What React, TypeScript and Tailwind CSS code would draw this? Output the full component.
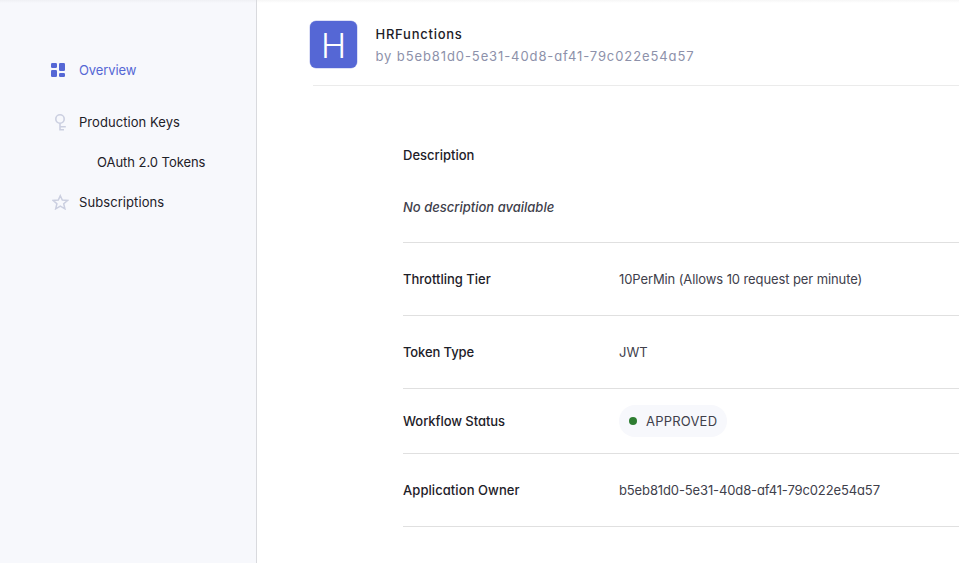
import type { ReactNode } from "react";

function OverviewIcon() {
  return (
    <svg width="14" height="14" viewBox="0 0 14 14" fill="#5567d5" className="block">
      <rect x="0" y="0" width="6" height="5" rx="1.2" />
      <rect x="8" y="0" width="6" height="8" rx="1.2" />
      <rect x="0" y="7" width="6" height="7" rx="1.2" />
      <rect x="8" y="10" width="6" height="4" rx="1.2" />
    </svg>
  );
}

function KeyIcon() {
  return (
    <svg width="12" height="17" viewBox="0 0 12 17" fill="none" stroke="#cbcfe0" strokeWidth="1.6" className="block">
      <circle cx="5" cy="5" r="4.2" />
      <path d="M5 9.2V16.4M5 12.8H10.8M5 15.7H9" />
    </svg>
  );
}

function StarIcon() {
  return (
    <svg width="17" height="16" viewBox="0 0 17 16" fill="none" stroke="#cbcfe0" strokeWidth="1.5" className="block">
      <path d="M8.3 1.7L10.3 6L15.6 6.4L11.7 9.7L12.9 14.8L8.3 12.1L3.7 14.8L4.9 9.7L1 6.4L6.3 6Z" />
    </svg>
  );
}

function Row({ label, height, children }: { label: ReactNode; height: string; children: ReactNode }) {
  return (
    <div className={`flex items-center border-b border-[#e0e0e0] ${height}`}>
      <div className="w-[216px] shrink-0 font-medium text-[#1d2028]">{label}</div>
      <div className="text-[#40404b]">{children}</div>
    </div>
  );
}

export default function App() {
  return (
    <div className="flex h-[563px] w-[959px] overflow-hidden bg-white font-['Inter','Liberation_Sans',sans-serif] text-[13px] leading-5 whitespace-nowrap [font-feature-settings:'cv11']">
      <aside className="w-[257px] shrink-0 border-r border-[#d9dade] bg-[#f7f8fc] text-[#1d2028]">
        <div className="h-[3px] bg-gradient-to-b from-[#eff0f4] to-[#f7f8fc]" />
        <nav className="pt-[57px]">
          <div className="flex h-5 items-center text-[#5567d5]">
            <span className="w-[79px] pl-[51px]"><OverviewIcon /></span>
            <span className="tracking-[-0.1px]">Overview</span>
          </div>
          <div className="mt-8 flex h-5 items-center">
            <span className="w-[79px] pl-[55px]"><KeyIcon /></span>
            <span className="tracking-[0.06px]">Production Keys</span>
          </div>
          <div className="mt-5 h-5 pl-[97px] tracking-[-0.04px]">OAuth 2.0 Tokens</div>
          <div className="mt-5 flex h-5 items-center">
            <span className="w-[79px] pl-[52px]"><StarIcon /></span>
            <span className="tracking-[0.08px]">Subscriptions</span>
          </div>
        </nav>
      </aside>
      <main className="min-w-0 flex-1">
        <div className="h-[3px] bg-gradient-to-b from-[#f6f6f6] to-white" />
        <header className="ml-14 flex h-[83px] border-b border-[#ebebeb]">
          <div className="mt-[18px] -ml-[3px] flex h-[47px] w-[47px] items-center justify-center rounded-[6px] bg-[#5567d5] pt-[2px] ring-[0.5px] ring-[#5567d5]/40">
            <span className="text-[34px] leading-[44px] font-light text-white">H</span>
          </div>
          <div className="ml-[18.5px] pt-5">
            <h1 className="h-[22px] leading-[22px] font-medium tracking-[0.75px] text-[#1d2028]">HRFunctions</h1>
            <p className="h-[22px] leading-[22px] tracking-[0.9px] text-[#8d91aa]">by b5eb81d0-5e31-40d8-af41-79c022e54a57</p>
          </div>
        </header>
        <section className="ml-[146px]">
          <div className="h-[157px] border-b border-[#e0e0e0] pt-[59px]">
            <h2 className="font-medium text-[#1d2028]">Description</h2>
            <p className="mt-8 font-medium text-[#40404b] italic">No description available</p>
          </div>
          <Row height="h-[73px]" label="Throttling Tier">
            <span className="tracking-[-0.1px]">10PerMin (Allows 10 request per minute)</span>
          </Row>
          <Row height="h-[73px]" label={<span className="tracking-[-0.1px]">Token Type</span>}>JWT</Row>
          <Row height="h-[65px]" label={<span className="tracking-[-0.05px]">Workflow Status</span>}>
            <div className="flex h-8 w-[108px] items-center rounded-full bg-[#f7f8fc] pl-[10px] text-[#40404b]">
              <span className="mr-[9px] size-2 rounded-full bg-[#2e7d32]" />
              <span className="tracking-[0.2px]">APPROVED</span>
            </div>
          </Row>
          <Row height="h-[73px]" label={<span className="tracking-[0.07px]">Application Owner</span>}>
            <span className="tracking-[-0.12px]">b5eb81d0-5e31-40d8-af41-79c022e54a57</span>
          </Row>
        </section>
      </main>
    </div>
  );
}
